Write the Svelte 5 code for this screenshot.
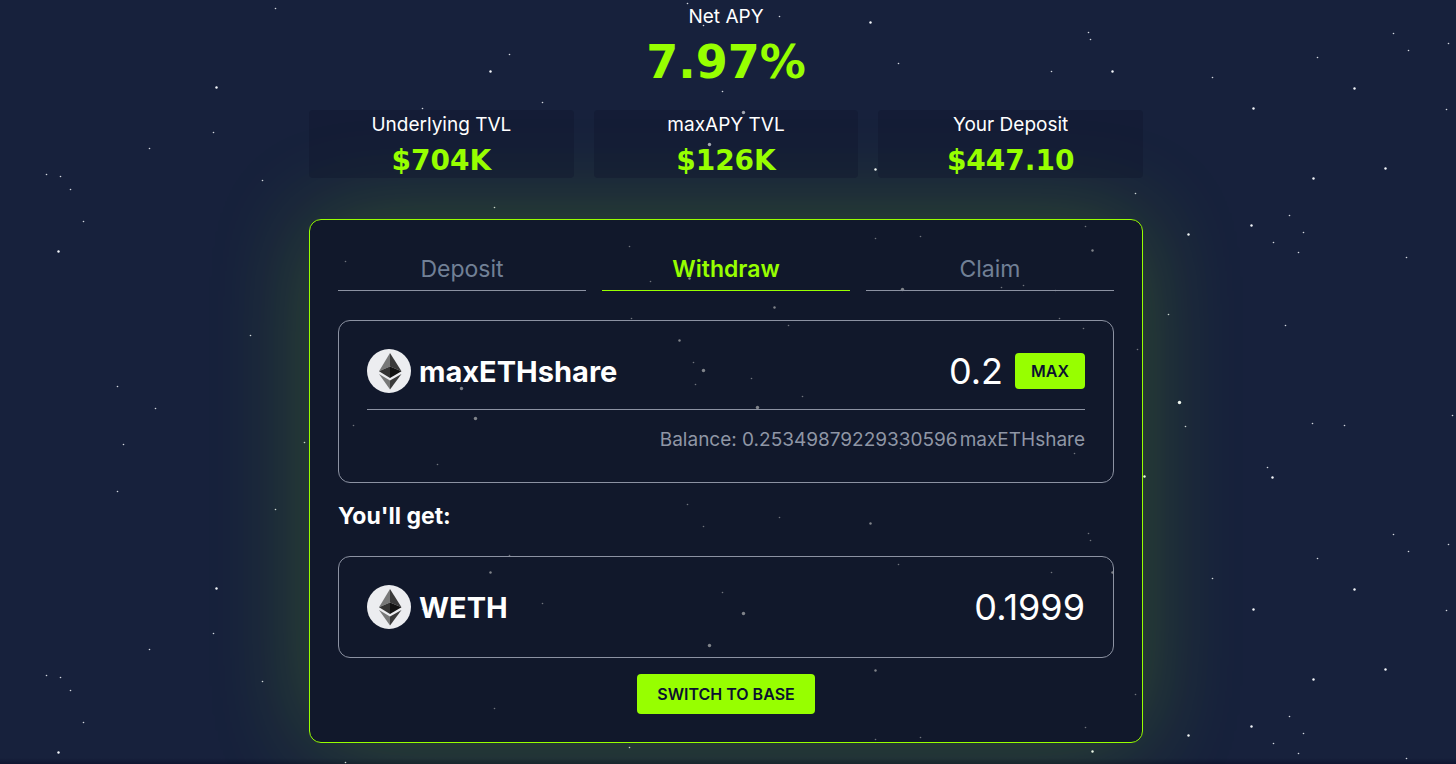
<script>
  const stats = [
    { label: 'Underlying TVL', value: '$704K' },
    { label: 'maxAPY TVL', value: '$126K' },
    { label: 'Your Deposit', value: '$447.10' }
  ];
  const tabs = ['Deposit', 'Withdraw', 'Claim'];
  const balance = '0.25349879229330596';
  let active = $state('Withdraw');
  let amount = $state('0.2');

  // The starfield repeats every TILE pixels down the page.
  const TILE = 501;
  const small = [
    [275, 8], [213, 132], [149, 148], [46, 174], [60, 176], [70, 189], [83, 221], [262, 180],
    [250, 335], [117, 386], [155, 408], [123, 444], [304, 442], [117, 491], [1393, 33], [1448, 43],
    [1408, 50], [1317, 57], [1212, 77], [1446, 109], [1289, 215], [1303, 232], [1273, 242],
    [1298, 252], [1406, 257], [1168, 314], [1285, 325], [1185, 426], [1312, 423], [1344, 425],
    [1452, 415], [1267, 467], [687, 3], [703, 25], [509, 54], [542, 102], [422, 108], [494, 207],
    [779, 16], [722, 91], [898, 63], [1088, 32], [1090, 39], [1051, 71], [1135, 193], [345, 261],
    [629, 246], [875, 238], [920, 236], [1085, 226], [650, 281], [1001, 287], [1023, 285],
    [1055, 290], [631, 318], [788, 325], [1059, 318], [1083, 328], [353, 425], [437, 464],
    [693, 362], [695, 384], [751, 378], [802, 396], [900, 448], [1074, 453], [1137, 349]
  ];
  const medium = [
    [216, 87], [58, 251], [1354, 88], [1253, 108], [1385, 168], [1313, 178], [1251, 225],
    [1188, 234], [1272, 477], [490, 71], [870, 22], [1112, 71], [875, 169], [1092, 250],
    [774, 307], [679, 340], [1144, 476], [689, 278]
  ];
  const large = [
    [1179, 402], [743, 112], [709, 144], [902, 289], [461, 388], [475, 418], [703, 370], [757, 407]
  ];
</script>

{#snippet ether()}
  <svg class="coin" viewBox="0 0 44 44" aria-hidden="true">
    <circle cx="22" cy="22" r="22" fill="#ecedf0" />
    <path d="M23 4 L12 22.3 L23 17.5 Z" fill="#777878" />
    <path d="M23 4 L34.5 22.3 L23 17.5 Z" fill="#3a3a3a" />
    <path d="M12 22.3 L23 17.5 V29 Z" fill="#343434" />
    <path d="M34.5 22.3 L23 17.5 V29 Z" fill="#121212" />
    <path d="M12 25 L23 31.5 V40.5 Z" fill="#777878" />
    <path d="M34.5 25 L23 31.5 V40.5 Z" fill="#3a3a3a" />
  </svg>
{/snippet}

<div class="page">
  <svg class="sky" aria-hidden="true">
    <defs>
      <pattern id="stars" width="1456" height={TILE} patternUnits="userSpaceOnUse">
        {#each small as [x, y]}<circle cx={x + 0.5} cy={y + 0.5} r="0.8" opacity="0.85" />{/each}
        {#each medium as [x, y]}<circle cx={x + 0.5} cy={y + 0.5} r="1.2" />{/each}
        {#each large as [x, y]}<circle cx={x + 0.5} cy={y + 0.5} r="1.7" />{/each}
      </pattern>
    </defs>
    <rect width="100%" height="100%" fill="url(#stars)" />
  </svg>

  <main>
    <header>
      <span class="label">Net APY</span>
      <strong class="apy">7.97%</strong>
    </header>

    <section class="stats">
      {#each stats as stat}
        <div class="stat">
          <span class="label">{stat.label}</span>
          <strong class="figure">{stat.value}</strong>
        </div>
      {/each}
    </section>

    <section class="card">
      <nav class="tabs">
        {#each tabs as tab}
          <button class="tab" class:active={tab === active} onclick={() => (active = tab)}>{tab}</button>
        {/each}
      </nav>

      <div class="box">
        <div class="row">
          {@render ether()}
          <label class="token" for="amount">maxETHshare</label>
          <input id="amount" class="value" type="text" inputmode="decimal" bind:value={amount} />
          <button class="action max" onclick={() => (amount = balance)}>MAX</button>
        </div>
        <div class="balance"><span>Balance: {balance}</span><span>maxETHshare</span></div>
      </div>

      <h2>You'll get:</h2>

      <div class="box">
        <div class="row">
          {@render ether()}
          <span class="token">WETH</span>
          <output class="value" for="amount">0.1999</output>
        </div>
      </div>

      <button class="action switch">SWITCH TO BASE</button>
    </section>
  </main>
</div>

<style>
  :global(body) {
    margin: 0;
    background: #17213c;
  }
  .page {
    position: relative;
    box-sizing: border-box;
    min-height: 100vh;
    padding: 0 4px 20px 0;
    overflow: hidden;
    background: linear-gradient(to top, #0f1631, #17213c 6px);
    color: #fff;
    font-family: Inter, "Liberation Sans", sans-serif;
  }
  .sky {
    position: absolute;
    inset: 0;
    width: 100%;
    height: 100%;
    fill: #f4f6fa;
  }
  main {
    position: relative;
    max-width: 834px;
    margin: 0 auto;
  }
  header,
  .stat {
    display: flex;
    flex-direction: column;
    align-items: center;
  }
  header {
    padding-top: 3px;
  }
  .label {
    font-size: 19px;
    line-height: 28px;
  }
  .apy,
  .figure {
    color: #97ff00;
    font-family: "DejaVu Sans", sans-serif;
    font-weight: 700;
  }
  .apy {
    font-size: 46px;
    line-height: 62px;
  }
  .figure {
    font-size: 28px;
    line-height: 44px;
  }
  .stats {
    display: grid;
    grid-template-columns: repeat(3, 1fr);
    gap: 20px;
    margin-top: 17px;
  }
  .stat {
    box-sizing: border-box;
    height: 68px;
    padding-top: 1px;
    border-radius: 4px;
    background: #0f142b59;
  }
  .card {
    display: flex;
    flex-direction: column;
    margin-top: 41px;
    padding: 28px;
    border: 1px solid #97ff00;
    border-radius: 12px;
    background: #0b101a80;
    box-shadow: 0 0 100px #97ff0038;
  }
  button {
    border: 0;
    font-family: inherit;
    cursor: pointer;
  }
  .tabs {
    display: grid;
    grid-template-columns: repeat(3, 1fr);
    gap: 16px;
    margin-bottom: 29px;
  }
  .tab {
    height: 43px;
    padding: 0;
    border-bottom: 1px solid #8c92a2;
    background: none;
    color: #718096;
    font-size: 23px;
    line-height: 40px;
  }
  .tab.active {
    border-bottom-color: #97ff00;
    color: #97ff00;
    font-weight: 600;
  }
  .box {
    padding: 28px;
    border: 1px solid #8c92a2;
    border-radius: 12px;
  }
  .row {
    display: flex;
    align-items: center;
    height: 44px;
  }
  .coin {
    flex: none;
    width: 44px;
    height: 44px;
  }
  .token {
    margin-left: 8px;
    font-size: 29px;
    font-weight: 700;
  }
  .value {
    flex: 1;
    min-width: 0;
    padding: 0;
    border: 0;
    outline: 0;
    background: none;
    color: #fff;
    font-family: inherit;
    font-size: 36px;
    line-height: 44px;
    text-align: right;
  }
  .action {
    border-radius: 4px;
    background: #97ff00;
    color: #0b1030;
    font-size: 16px;
    font-weight: 600;
  }
  .max {
    height: 36px;
    margin-left: 12px;
    padding: 0 16px;
  }
  .switch {
    align-self: center;
    height: 40px;
    margin-top: 16px;
    padding: 0 20px;
  }
  .balance {
    display: flex;
    justify-content: flex-end;
    gap: 2px;
    margin-top: 16px;
    padding-top: 16px;
    border-top: 1px solid #8c92a2;
    color: #8f96a5;
    font-size: 19px;
    line-height: 28px;
  }
  h2 {
    margin: 17px 0 24px;
    font-size: 23px;
    line-height: 32px;
    font-weight: 700;
  }
</style>
